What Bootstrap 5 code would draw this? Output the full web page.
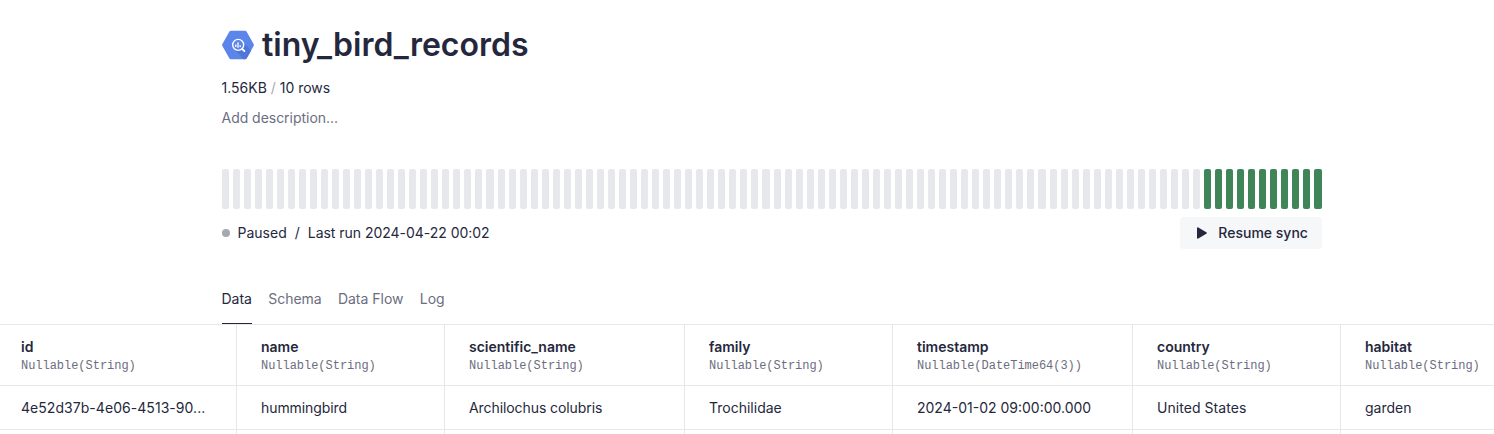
<!DOCTYPE html>
<html lang="en">
<head>
<meta charset="utf-8">
<meta name="viewport" content="width=device-width, initial-scale=1">
<title>tiny_bird_records</title>
<link href="https://cdn.jsdelivr.net/npm/bootstrap@5.3.0/dist/css/bootstrap.min.css" rel="stylesheet">
<style>
  html, body { height: 434px; overflow: hidden; }
  main { height: 434px; overflow: hidden; }
  body { font-family: Inter, sans-serif; font-size: 14px; line-height: 20px; color: #25283d; }
  .page-col { width: 1100px; margin-left: 221.5px; }
  .ds-title { font-size: 32px; line-height: 40px; font-weight: 600; color: #25283d; }
  .ds-name { gap: 8.5px; }
  .ds-head { padding-top: 25px; }
  .ds-size { margin-top: 13px; }
  .ds-desc { margin-top: 10px; letter-spacing: -.03px; }
  .muted { color: #6b6e80; }
  .faint { color: #a6a7b1; }
  .runs { height: 40px; gap: 4px; margin: 41px 0 0 .5px; }
  .run { flex: none; width: 7px; background: #e7e8ec; border-radius: 2px; }
  .run:nth-child(25n) { width: 8px; }
  .run.ok { background: #408558; }
  .state-dot { width: 8px; height: 8px; background: #a6a7b1; }
  .last-run { letter-spacing: -.03px; }
  .btn-sync { width: 142px; height: 32px; background: #f6f7f9; color: #25283d; font-size: 14px; line-height: 20px; font-weight: 500; border: 0; border-radius: 4px; padding: 6px 13.6px 6px 17px; }
  .tabs { margin-top: 34px; gap: 16.2px; height: 41px; }
  .tabs .nav-link { padding: 6px 0 0; color: #6b6e80; height: 41px; border-bottom: 1px solid transparent; }
  .tabs .nav-link.active { color: #25283d; border-bottom-color: #25283d; }
  .grid-rows { margin-left: -3px; border-top: 1px solid #e7e8ec; }
  .cell { flex: none; width: 208px; padding: 0 24px; border-right: 1px solid #e7e8ec; border-bottom: 1px solid #e7e8ec; }
  .cell.wide { width: 240px; }
  .head-row .cell { height: 61px; padding-top: 12px; font-weight: 600; }
  .data-row .cell { height: 44px; padding-top: 12px; }
  .col-type { font: 400 12px/16px "Liberation Mono", monospace; color: #6b6e80; letter-spacing: -.03px; padding-top: 1px; }
  .tight { letter-spacing: -.08px; }
  .loose { letter-spacing: .05px; }
</style>
<script src="https://cdn.jsdelivr.net/npm/bootstrap@5.3.0/dist/js/bootstrap.bundle.min.js"></script>
</head>
<body class="bg-white">
<main>
  <div class="page-col">
    <header class="ds-head">
      <div class="ds-name d-flex align-items-center">
        <svg width="32" height="32" viewBox="0 0 32 32" aria-hidden="true">
          <path fill="#5c85ec" d="M9 1.700h14a2 2 0 0 1 1.700 1l6.900 12.300a2 2 0 0 1 0 2l-6.900 12.300a2 2 0 0 1-1.700 1H9a2 2 0 0 1-1.700-1L.4 17a2 2 0 0 1 0-2L7.300 2.700A2 2 0 0 1 9 1.700z"/>
          <path fill="#4f76d8" d="M20.500 12.200l8.700 9.200-4.500 7.900a2 2 0 0 1-1.700 1h-1.200L12.500 20.500l4-.8 4.600 2.300 1-1-2.500-3z"/>
          <circle cx="16.200" cy="15.900" r="5.500" fill="#5c85ec" stroke="#fff" stroke-width="1.400"/>
          <path stroke="#fff" stroke-width="1.900" stroke-linecap="round" d="M20.400 20.100l2 2"/>
          <path stroke="#fff" stroke-width="1.300" d="M13.800 15.500v2.600M16 13.200v5.600M18.200 16.300v1.800"/>
        </svg>
        <h1 class="ds-title mb-0">tiny_bird_records</h1>
      </div>
      <div class="ds-size">1.56KB <span class="faint">/</span> 10 rows</div>
      <div class="ds-desc muted">Add description...</div>
    </header>
    <div class="runs d-flex" id="runs"></div>
    <div class="d-flex align-items-center justify-content-between mt-2">
      <div class="d-flex align-items-center gap-2">
        <span class="state-dot rounded-circle"></span>
        <span>Paused</span><span>/</span><span class="last-run">Last run 2024-04-22 00:02</span>
      </div>
      <button class="btn btn-sync d-flex align-items-center justify-content-between" type="button">
        <svg width="10" height="12" viewBox="0 0 10 12" aria-hidden="true"><path fill="#25283d" d="M0 1.200C0 .4.700.200 1.300.500l8 4.700c.7.400.7 1.200 0 1.600l-8 4.700C.7 11.800 0 11.600 0 10.800z"/></svg>
        Resume sync
      </button>
    </div>
    <nav class="nav tabs flex-nowrap">
      <a class="nav-link active" href="#">Data</a>
      <a class="nav-link" href="#">Schema</a>
      <a class="nav-link" href="#">Data Flow</a>
      <a class="nav-link" href="#">Log</a>
    </nav>
  </div>
  <section class="grid-rows">
    <div class="d-flex head-row">
      <div class="cell wide">id<div class="col-type">Nullable(String)</div></div>
      <div class="cell">name<div class="col-type">Nullable(String)</div></div>
      <div class="cell wide">scientific_name<div class="col-type">Nullable(String)</div></div>
      <div class="cell">family<div class="col-type">Nullable(String)</div></div>
      <div class="cell wide">timestamp<div class="col-type">Nullable(DateTime64(3))</div></div>
      <div class="cell">country<div class="col-type">Nullable(String)</div></div>
      <div class="cell wide">habitat<div class="col-type">Nullable(String)</div></div>
    </div>
    <div class="d-flex data-row">
      <div class="cell wide loose">4e52d37b-4e06-4513-90...</div>
      <div class="cell tight">hummingbird</div>
      <div class="cell wide tight">Archilochus colubris</div>
      <div class="cell">Trochilidae</div>
      <div class="cell wide">2024-01-02 09:00:00.000</div>
      <div class="cell loose">United States</div>
      <div class="cell wide">garden</div>
    </div>
    <div class="d-flex data-row">
      <div class="cell wide"></div><div class="cell"></div><div class="cell wide"></div><div class="cell"></div><div class="cell wide"></div><div class="cell"></div><div class="cell wide"></div>
    </div>
  </section>
</main>
<script>
  const runs = document.getElementById('runs');
  for (let i = 0; i < 100; i++) {
    const bar = document.createElement('div');
    bar.className = i < 89 ? 'run' : 'run ok';
    runs.append(bar);
  }
</script>
</body>
</html>
